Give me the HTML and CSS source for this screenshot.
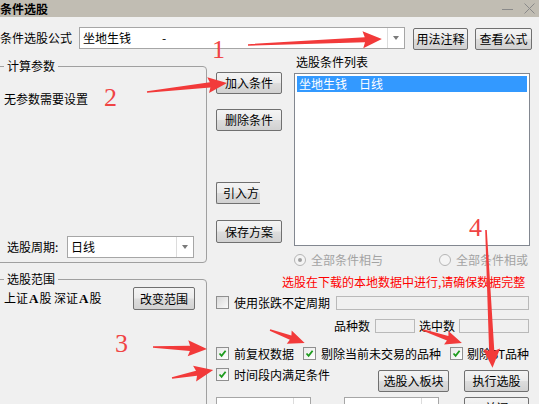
FILE: index.html
```html
<!DOCTYPE html>
<html lang="zh-CN">
<head>
<meta charset="utf-8">
<title>条件选股</title>
<link rel="stylesheet" href="styles.css">
</head>
<body>
<div class="win">
  <div class="titlebar">
    <span class="title">条件选股</span>
    <span class="win-ctrls">
      <svg class="ctrl" width="11" height="11" viewBox="0 0 11 11"><path d="M0 6.5H11" stroke="#8a8a8a" stroke-width="1"/></svg>
      <svg class="ctrl" width="11" height="11" viewBox="0 0 11 11"><path d="M0.5 0.5L10.5 10.5M10.5 0.5L0.5 10.5" stroke="#8a8a8a" stroke-width="1"/></svg>
    </span>
  </div>

  <div class="formula-row">
    <span class="lbl-formula">条件选股公式</span>
    <div class="combo combo-formula">
      <span class="combo-text">坐地生钱<span class="dash">-</span></span>
      <span class="combo-btn"><i class="tri"></i></span>
    </div>
    <button class="btn btn-note">用法注释</button>
    <button class="btn btn-view">查看公式</button>
  </div>

  <div class="main">
    <div class="left">
      <fieldset class="group g-params">
        <legend>计算参数</legend>
        <div class="no-param">无参数需要设置</div>
        <div class="period-row">
          <span class="period-lbl">选股周期:</span>
          <div class="combo combo-period">
            <span class="combo-text">日线</span>
            <span class="combo-btn"><i class="tri"></i></span>
          </div>
        </div>
      </fieldset>
      <fieldset class="group g-range">
        <legend>选股范围</legend>
        <div class="range-row">
          <span class="range-text">上证<b class="a">A</b>股 深证<b class="a">A</b>股</span>
          <button class="btn btn-range">改变范围</button>
        </div>
      </fieldset>
    </div>

    <div class="right">
      <div class="top">
        <div class="btncol">
          <button class="btn b-add">加入条件</button>
          <button class="btn b-del">删除条件</button>
          <button class="btn b-imp">引入方</button>
          <button class="btn b-save">保存方案</button>
        </div>
        <div class="listcol">
          <div class="list-lbl">选股条件列表</div>
          <div class="listbox">
            <div class="item sel">坐地生钱　日线</div>
          </div>
          <div class="radio-row">
            <span class="radio on"><i></i></span><span class="rtext">全部条件相与</span>
            <span class="radio r2"></span><span class="rtext">全部条件相或</span>
          </div>
        </div>
      </div>

      <div class="warn">选股在下载的本地数据中进行,请确保数据完整</div>

      <div class="row row-a">
        <span class="box"></span><span class="ctext">使用张跌不定周期</span>
        <span class="field f-long"></span>
      </div>

      <div class="row row-b">
        <span class="cnt-lbl l1">品种数</span><span class="field f-n1"></span>
        <span class="cnt-lbl l2">选中数</span><span class="field f-n2"></span>
      </div>

      <div class="row row-c">
        <span class="box on"><svg width="11" height="11" viewBox="0 0 11 11"><path d="M2.5 5.5L4.6 7.8L8.6 2.8" fill="none" stroke="#1c9b1c" stroke-width="1.8"/></svg></span><span class="ctext">前复权数据</span>
        <span class="box on c2"><svg width="11" height="11" viewBox="0 0 11 11"><path d="M2.5 5.5L4.6 7.8L8.6 2.8" fill="none" stroke="#1c9b1c" stroke-width="1.8"/></svg></span><span class="ctext">剔除当前未交易的品种</span>
        <span class="box on c3"><svg width="11" height="11" viewBox="0 0 11 11"><path d="M2.5 5.5L4.6 7.8L8.6 2.8" fill="none" stroke="#1c9b1c" stroke-width="1.8"/></svg></span><span class="ctext t3">剔除ST品种</span>
      </div>

      <div class="row row-d">
        <span class="box on"><svg width="11" height="11" viewBox="0 0 11 11"><path d="M2.5 5.5L4.6 7.8L8.6 2.8" fill="none" stroke="#1c9b1c" stroke-width="1.8"/></svg></span><span class="ctext">时间段内满足条件</span>
        <button class="btn b-block">选股入板块</button>
        <button class="btn b-run">执行选股</button>
      </div>

      <div class="row row-e">
        <div class="combo combo-s1"><span class="combo-text"></span><span class="combo-btn"></span></div>
        <div class="combo combo-s2"><span class="combo-text"></span><span class="combo-btn"></span></div>
        <button class="btn b-close">关闭</button>
      </div>
    </div>
  </div>

  <svg class="annot" width="539" height="404" viewBox="0 0 539 404">
    <g fill="#f23a3a">
      <g transform="translate(248 45) rotate(-2.56)"><polygon points="0,-0.8 117,-2.6 115,-8.5 134,0 115,8.5 117,2.6 0,0.8"/></g>
      <g transform="translate(147 92) rotate(-6.4)"><polygon points="0,-0.8 63.5,-2.6 61.5,-8 80.5,0 61.5,8 63.5,2.6 0,0.8"/></g>
      <g transform="translate(153 347) rotate(2.1)"><polygon points="0,-0.8 37,-2.6 35,-8 54,0 35,8 37,2.6 0,0.8"/></g>
      <g transform="translate(172 378) rotate(-11)"><polygon points="0,-0.8 25,-2.6 23,-8 42,0 23,8 25,2.6 0,0.8"/></g>
      <g transform="translate(270 330) rotate(20.4)"><polygon points="0,-0.7 22,-2.3 20.5,-7 37,0 20.5,7 22,2.3 0,0.7"/></g>
      <g transform="translate(423 330) rotate(18.4)"><polygon points="0,-0.7 26,-2.3 24.5,-7 41,0 24.5,7 26,2.3 0,0.7"/></g>
      <g transform="translate(486 230) rotate(87.3)"><polygon points="0,-0.8 121,-2.6 119,-8.5 138,0 119,8.5 121,2.6 0,0.8"/></g>
    </g>
    <g class="nums">
      <text x="212" y="58">1</text>
      <text x="104" y="106">2</text>
      <text x="115" y="352">3</text>
      <text x="469" y="236">4</text>
    </g>
  </svg>
</div>
</body>
</html>
```

FILE: styles.css
```css
* { box-sizing: border-box; }
html, body { margin: 0; padding: 0; }
body {
  width: 539px;
  height: 404px;
  overflow: hidden;
  background: #f0f0f0;
  font-family: "Noto Sans CJK SC", "Noto Sans", sans-serif;
  font-size: 12px;
  line-height: 14px;
  color: #000;
}
.win { position: relative; width: 539px; height: 404px; overflow: hidden; }

/* title bar */
.titlebar {
  height: 17px;
  background: #c1bdb3;
  display: flex;
  justify-content: space-between;
  align-items: center;
}
.title { font-weight: bold; font-size: 12px; line-height: 17px; }
.win-ctrls { display: flex; align-items: center; gap: 11px; padding-right: 4px; }
.ctrl { display: block; }

/* generic controls */
.btn {
  font-family: inherit;
  font-size: 12px;
  line-height: 14px;
  color: #000;
  padding: 0;
  margin: 0;
  height: 22px;
  border: 1px solid #707070;
  border-radius: 2px;
  background: linear-gradient(#f4f4f4 0%, #ebebeb 48%, #dddddd 52%, #d1d1d1 100%);
  display: flex;
  align-items: center;
  justify-content: center;
  flex: none;
}
.combo {
  display: flex;
  height: 22px;
  background: #fff;
  border: 1px solid #a6a6a6;
  flex: none;
}
.combo-text { flex: 1; padding-left: 3px; line-height: 20px; white-space: pre; }
.combo-btn {
  width: 17px;
  border-left: 1px solid #dcdcdc;
  display: flex;
  align-items: center;
  justify-content: center;
}
.tri {
  display: block;
  width: 0; height: 0;
  border-left: 3.5px solid transparent;
  border-right: 3.5px solid transparent;
  border-top: 4px solid #7a7a7a;
}
.field {
  display: block;
  height: 14px;
  border: 1px solid #b9b9b9;
  background: #f0f0f0;
  flex: none;
}
.box {
  width: 13px;
  height: 13px;
  border: 1px solid #8f8f8f;
  background: linear-gradient(135deg, #d9d9d9, #fafafa);
  flex: none;
  display: flex;
  align-items: center;
  justify-content: center;
}
.box.on { background: linear-gradient(135deg, #e8e8e8, #ffffff); }
.box svg { display: block; }
.ctext { margin-left: 5px; white-space: nowrap; }

/* formula row */
.formula-row { display: flex; margin-top: 10px; height: 23px; align-items: flex-start; }
.lbl-formula { width: 79px; line-height: 22px; }
.combo-formula { width: 326px; }
.dash { margin-left: 31px; }
.btn-note { margin-top: 1px; margin-left: 8px; width: 55px; }
.btn-view { margin-top: 1px; margin-left: 7px; width: 57px; }

/* main */
.main { display: flex; margin-top: 5px; }
.left { width: 211px; margin-left: -4px; flex: none; }

.group {
  margin: 0;
  padding: 0 0 0 7px;
  border: 1px solid #a0a0a0;
  border-radius: 0 4px 4px 0;
  min-width: 0;
  display: block;
}
.group legend { margin-left: 0; padding: 0 3px; line-height: 14px; }
.g-params { margin-top: 4px; height: 204px; }
.no-param { margin-top: 19px; }
.period-row { display: flex; align-items: center; margin-top: 130px; height: 22px; }
.period-lbl { width: 63px; padding-left: 3px; }
.combo-period { width: 127px; }

.g-range { margin-top: 9px; height: 200px; }
.range-row { display: flex; align-items: center; margin-top: 1px; height: 23px; }
.range-text { width: 129px; white-space: nowrap; }
.a { font-family: "Liberation Serif", serif; font-weight: bold; font-size: 13px; margin: 0 1px; }
.btn-range { width: 62px; height: 23px; }

.right { flex: 1; display: flex; flex-direction: column; }
.top { display: flex; }
.btncol { margin-left: 9px; width: 66px; display: flex; flex-direction: column; flex: none; }
.b-add { margin-top: 17px; width: 66px; }
.b-del { margin-top: 15px; width: 66px; }
.b-imp {
  margin-top: 51px;
  width: 44px;
  border-right: none;
  border-radius: 2px 0 0 2px;
  justify-content: flex-end;
  padding-right: 1px;
}
.b-save { margin-top: 16px; width: 66px; height: 23px; }

.listcol { margin-left: 12px; width: 236px; flex: none; }
.list-lbl { height: 14px; padding-left: 2px; }
.listbox {
  margin-top: 4px;
  height: 173px;
  border: 1px solid #828790;
  background: #fff;
  padding: 2px;
}
.item { height: 16px; line-height: 16px; padding-left: 2px; }
.item.sel { background: #3399ff; color: #fff; }

.radio-row { display: flex; align-items: center; margin-top: 7px; height: 14px; color: #a3a3a3; }
.radio {
  width: 12px; height: 12px;
  border: 1px solid #b5b5b5;
  border-radius: 50%;
  background: #f4f4f4;
  display: flex; align-items: center; justify-content: center;
  flex: none;
}
.radio i { display: block; width: 4px; height: 4px; border-radius: 50%; background: #a0a0a0; }
.radio.r2 { margin-left: 56px; }
.rtext { margin-left: 5px; white-space: nowrap; }

.warn { margin-top: 8px; margin-left: 75px; color: #ff0000; white-space: nowrap; height: 14px; }

.row { display: flex; padding-left: 9px; flex: none; }
.row-a { margin-top: 6px; height: 15px; align-items: center; }
.f-long { margin-left: 6px; width: 193px; }

.row-b { margin-top: 9px; height: 14px; align-items: center; padding-left: 0; }
.l1 { margin-left: 127px; }
.f-n1 { margin-left: 5px; width: 40px; }
.l2 { margin-left: 4px; }
.f-n2 { margin-left: 4px; width: 70px; }

.row-c { margin-top: 13px; height: 15px; align-items: center; }
.c2, .c3 { margin-left: 9px; }
.t3 { margin-left: 4px; }

.row-d { margin-top: 7px; height: 24px; align-items: flex-start; }
.b-block { margin-top: 2px; margin-left: 48px; width: 71px; }
.b-run { margin-top: 2px; margin-left: 15px; width: 65px; }

.row-e { margin-top: 5px; height: 22px; }
.combo-s1 { width: 95px; }
.combo-s2 { margin-left: 33px; width: 95px; }
.b-close { margin-left: 25px; width: 65px; }

/* annotations overlay */
.annot { position: absolute; left: 0; top: 0; pointer-events: none; }
.nums text { font-family: "Liberation Serif", "DejaVu Serif", serif; font-size: 26px; fill: #f04444; }
```
